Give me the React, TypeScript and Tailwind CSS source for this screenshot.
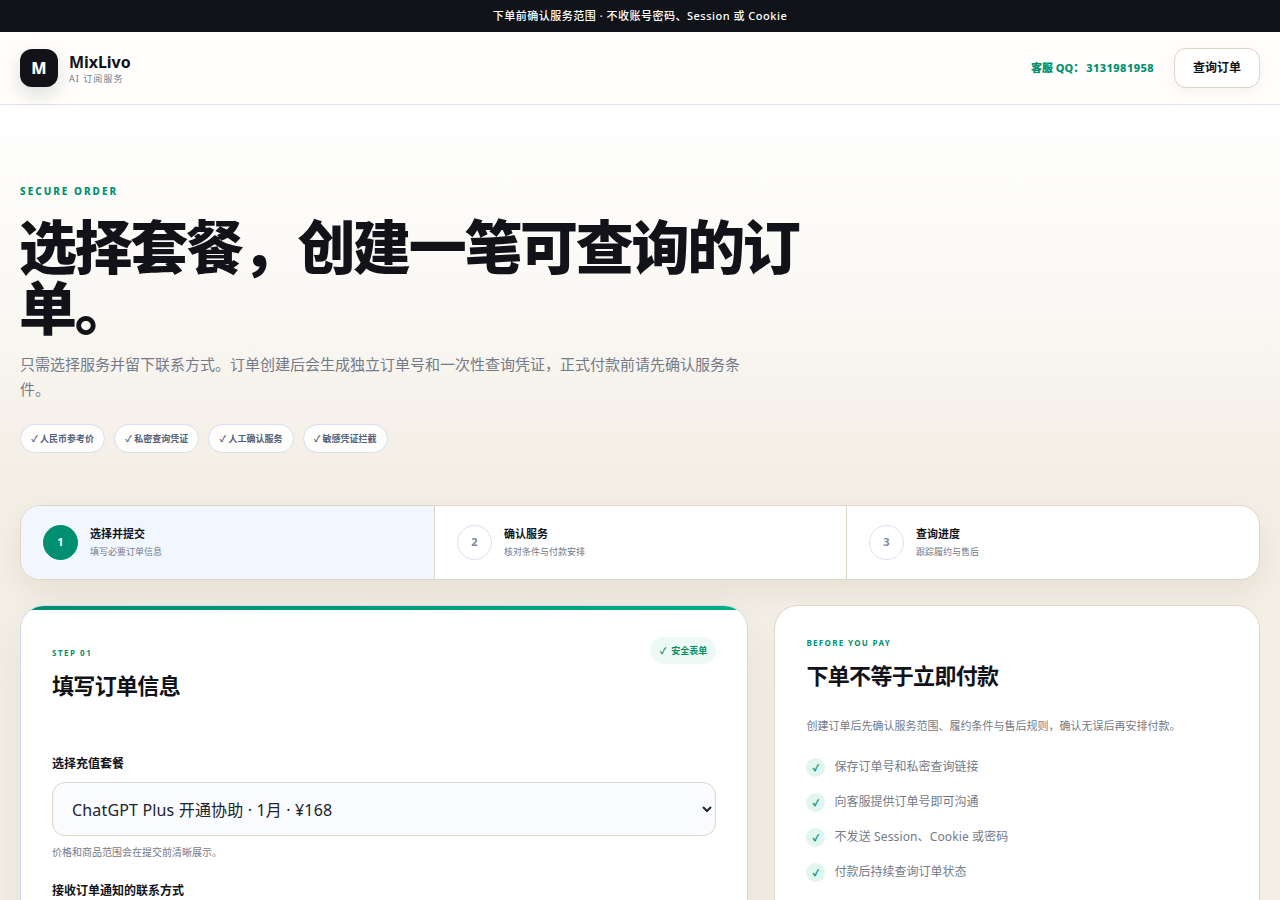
import clsx from "clsx";

const chips = ["人民币参考价", "私密查询凭证", "人工确认服务", "敏感凭证拦截"];

const steps = [
  { title: "选择并提交", desc: "填写必要订单信息" },
  { title: "确认服务", desc: "核对条件与付款安排" },
  { title: "查询进度", desc: "跟踪履约与售后" },
];

const notes = [
  { text: "保存订单号和私密查询链接" },
  { text: "向客服提供订单号即可沟通" },
  { text: "不发送 Session、Cookie 或密码", latin: true },
  { text: "付款后持续查询订单状态" },
];

function Header() {
  return (
    <header className="flex h-[73px] items-center justify-between border-b border-[#dfe3f0] bg-[#fffefc] px-5">
      <div className="flex items-center gap-[11px]">
        <div className="flex h-[38px] w-[38px] items-center justify-center rounded-xl bg-[#111318] text-base font-extrabold text-white shadow-[0_8px_20px_rgba(17,19,24,0.14)]">
          M
        </div>
        <div className="flex flex-col pt-[3px]">
          <strong className="text-base leading-[19px] font-bold tracking-[-0.05px]">MixLivo</strong>
          <span className="text-[9px] leading-[14px] tracking-[1.05px] text-[#747a87]">AI 订阅服务</span>
        </div>
      </div>
      <div className="flex items-center gap-5">
        <span className="text-[11px] font-extrabold text-[#008f70]">
          客服 QQ：<span className="ml-0.5 tracking-[0.42px]">3131981958</span>
        </span>
        <button className="h-10 w-[86px] rounded-xl border border-[#ddd6c9] bg-white text-xs font-bold shadow-[0_4px_12px_rgba(17,19,24,0.05)]">
          查询订单
        </button>
      </div>
    </header>
  );
}

function Hero() {
  return (
    <section className="px-5 pt-[78px]">
      <p className="text-[10px] leading-4 font-extrabold tracking-[2px] text-[#008f70]">SECURE ORDER</p>
      <h1 className="mt-[18px] -ml-px w-[800px] text-[58px] leading-[60.9px] font-extrabold tracking-[-2.32px]">
        选择套餐，创建一笔可查询的订单。
      </h1>
      <p className="mt-[13px] w-[730px] text-[15px] leading-[25.5px] text-[#747a87]">
        只需选择服务并留下联系方式。订单创建后会生成独立订单号和一次性查询凭证，正式付款前请先确认服务条件。
      </p>
      <div className="mt-[21px] flex gap-[9px]">
        {chips.map((chip) => (
          <span
            key={chip}
            className="flex h-[29px] w-[85.2px] items-center justify-center rounded-full border border-[#d5dff0] bg-[#fefdfc] text-[9px] font-bold whitespace-nowrap text-[#526079]"
          >
            ✓ {chip}
          </span>
        ))}
      </div>
    </section>
  );
}

function Stepper() {
  return (
    <div className="mx-5 mt-[52px] grid h-[75px] grid-cols-[414px_412px_412px] overflow-hidden rounded-[20px] border border-[#ddd6c9] bg-white shadow-[0_12px_32px_rgba(50,35,20,0.07)]">
      {steps.map((step, i) => (
        <div
          key={step.title}
          className={clsx(
            "flex items-center gap-3 border-[#ddd6c9] px-[22px]",
            i === 0 && "bg-[#f2f7ff]",
            i < steps.length - 1 && "border-r",
          )}
        >
          <span
            className={clsx(
              "flex h-[35px] w-[35px] items-center justify-center rounded-full border text-[11px] font-bold",
              i === 0 ? "border-[#008f70] bg-[#008f70] text-white" : "border-[#dbe1f0] bg-white text-[#7e8ba3]",
            )}
          >
            {i + 1}
          </span>
          <div>
            <p className="text-[11px] leading-[18px] font-bold">{step.title}</p>
            <p className="text-[9px] leading-[17px] text-[#747a87]">{step.desc}</p>
          </div>
        </div>
      ))}
    </div>
  );
}

function OrderForm() {
  return (
    <section className="overflow-hidden rounded-[24px] border border-[#cfdaec] bg-white shadow-[0_20px_50px_rgba(50,45,40,0.07)]">
      <div className="h-1 bg-linear-to-r from-[#008f70] to-[#00ad83]" />
      <div className="px-[31px] pt-[27px]">
        <div className="flex h-[63px] items-start justify-between">
          <div>
            <p className="mt-2 text-[8px] leading-4 font-bold tracking-[1.5px] text-[#008f70]">STEP 01</p>
            <h2 className="mt-2 text-[22px] leading-[32px] font-bold tracking-[-0.66px]">填写订单信息</h2>
          </div>
          <span className="flex h-[27px] w-[66px] items-center justify-center gap-[5px] rounded-full bg-[#ecf9f5] text-[9px] font-bold text-[#008f5f]">
            <span>✓</span>
            安全表单
          </span>
        </div>
        <label className="mt-[55px] block text-xs leading-[18px] font-bold">选择充值套餐</label>
        <select className="mt-[9px] block h-[54px] w-full rounded-[13px] border border-[#ddd6c9] bg-[#fafbff] px-[15px] pt-0.5 text-base tracking-[0.16px] text-[#20242c]">
          <option>ChatGPT Plus 开通协助 · 1月 · ¥168</option>
        </select>
        <p className="mt-2 text-[10px] leading-[17px] text-[#747a87]">价格和商品范围会在提交前清晰展示。</p>
        <label className="mt-[21px] block text-xs leading-[18px] font-bold">接收订单通知的联系方式</label>
        <input className="mt-[9px] block h-[54px] w-full rounded-[13px] border border-[#ddd6c9] bg-[#fafbff] px-[15px]" />
      </div>
    </section>
  );
}

function BeforePay() {
  return (
    <aside className="rounded-[24px] border border-[#ddd6c9] bg-white px-[31px] pt-[29px] shadow-[0_8px_24px_rgba(50,35,20,0.02)]">
      <p className="text-[8px] leading-4 font-bold tracking-[1.32px] text-[#008f70]">BEFORE YOU PAY</p>
      <h2 className="mt-2 text-[22px] leading-[32px] font-bold tracking-[-0.66px]">下单不等于立即付款</h2>
      <p className="mt-[25px] text-[11px] leading-5 whitespace-nowrap text-[#747a87]">
        创建订单后先确认服务范围、履约条件与售后规则，确认无误后再安排付款。
      </p>
      <ul className="mt-[21px] flex flex-col gap-[14px]">
        {notes.map((note) => (
          <li
            key={note.text}
            className={clsx(
              "flex h-[21px] items-center gap-[9px] text-xs text-[#747a87]",
              note.latin && "tracking-[0.13px]",
            )}
          >
            <span className="mt-px flex h-[19px] w-[19px] items-center justify-center rounded-full bg-[#e0f6ef] text-[9px] font-extrabold text-[#008f70]">
              ✓
            </span>
            {note.text}
          </li>
        ))}
      </ul>
    </aside>
  );
}

export default function App() {
  return (
    <div className="h-[900px] overflow-hidden bg-[linear-gradient(180deg,#ffffff_105px,#f9f7f2_330px,#f4efe7_455px,#f3efe4_505px,#f3efe4_900px)] font-['Noto_Sans','Noto_Sans_CJK_SC',sans-serif] text-[#111318]">
      <div className="flex h-8 items-center justify-center bg-[#101419] text-[11px] font-medium tracking-[0.5px] text-white">
        下单前确认服务范围 · 不收账号密码、Session 或 Cookie
      </div>
      <Header />
      <Hero />
      <Stepper />
      <main className="mx-5 mt-[25px] grid h-[420px] grid-cols-[1.5fr_1fr] gap-[26px]">
        <OrderForm />
        <BeforePay />
      </main>
    </div>
  );
}
